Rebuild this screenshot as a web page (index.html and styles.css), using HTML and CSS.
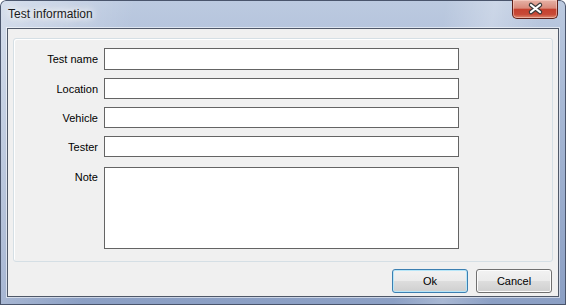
FILE: index.html
```html
<!DOCTYPE html>
<html lang="en">
<head>
    <meta charset="UTF-8">
    <title>Test information</title>
    <link rel="stylesheet" href="styles.css">
</head>
<body>
    <div class="window">
        <div class="titlebar">
            <span class="title">Test information</span>
            <button class="close">
                <svg width="44" height="18" viewBox="0 0 44 18">
                    <path d="M18 5 L27 12 M27 5 L18 12" stroke="#3c3c3c" stroke-width="4.5" stroke-linecap="round"/>
                    <path d="M18 5 L27 12 M27 5 L18 12" stroke="#ffffff" stroke-width="2.2" stroke-linecap="round"/>
                </svg>
            </button>
        </div>

        <div class="client">
            <div class="group">
                <div class="row">
                    <label>Test name</label>
                    <input type="text">
                </div>
                <div class="row">
                    <label>Location</label>
                    <input type="text">
                </div>
                <div class="row">
                    <label>Vehicle</label>
                    <input type="text">
                </div>
                <div class="row">
                    <label>Tester</label>
                    <input type="text">
                </div>
                <div class="row note">
                    <label>Note</label>
                    <textarea></textarea>
                </div>
            </div>

            <div class="buttons">
                <button class="btn default">Ok</button>
                <button class="btn">Cancel</button>
            </div>
        </div>
    </div>
</body>
</html>
```

FILE: styles.css
```css
body {
    margin: 0;
    font-family: "Liberation Sans", Arial, sans-serif;
    font-size: 11px;
    color: #000;
}
.window {
    width: 566px;
    height: 305px;
    box-sizing: border-box;
    display: flex;
    flex-direction: column;
    padding: 0 7px 8px 7px;
    border-radius: 6px 6px 0 0;
    background:
        linear-gradient(100deg, rgba(255, 255, 255, 0.4) 0%, rgba(255, 255, 255, 0) 22%, rgba(255, 255, 255, 0) 72%, rgba(255, 255, 255, 0.25) 80%, rgba(255, 255, 255, 0) 88%),
        linear-gradient(#bccae0, #a9bad6 30%, #8b9fc4 100%);
    box-shadow: inset 0 0 0 1px #4a556c;
}
.titlebar {
    height: 28px;
    display: flex;
    justify-content: space-between;
    align-items: flex-start;
}
.title {
    margin: 7px 0 0 1px;
    font-size: 12px;
    line-height: 14px;
    color: #1a1a1a;
    text-shadow: 0 0 6px #fff, 0 0 10px #fff, 0 0 14px rgba(255, 255, 255, 0.9);
}
.close {
    width: 46px;
    height: 19px;
    margin-right: 1px;
    padding: 0;
    border: 1px solid #5e2019;
    border-top: none;
    border-radius: 0 0 5px 5px;
    background: linear-gradient(#e6b2a6 0%, #d98a7b 45%, #c5412f 52%, #c84a37 80%, #dc8a70 100%);
    box-shadow: inset 0 0 0 1px rgba(255, 220, 210, 0.5);
}
.close svg {
    display: block;
}
.client {
    flex: 1;
    display: flex;
    flex-direction: column;
    padding: 9px 5px 3px 5px;
    background: #f0f0f0;
    border: 1px solid #4f5868;
    box-shadow: 0 0 0 1px rgba(255, 255, 255, 0.55);
}
.group {
    display: flex;
    flex-direction: column;
    padding: 9px 0 12px 0;
    border: 1px solid #d5dfe5;
    border-radius: 3px;
    box-shadow: inset 1px 1px 0 #fff;
}
.row {
    display: flex;
    align-items: center;
    gap: 6px;
}
.row + .row {
    margin-top: 8px;
}
.row.note {
    align-items: flex-start;
    margin-top: 10px;
}
.row label {
    width: 84px;
    text-align: right;
}
.row.note label {
    padding-top: 4px;
}
input, textarea {
    width: 355px;
    height: 21px;
    box-sizing: border-box;
    margin: 0;
    padding: 0 3px;
    border: 1px solid #646464;
    background: #fff;
    font: inherit;
    outline: none;
}
.row:first-child input {
    height: 22px;
}
textarea {
    height: 82px;
    resize: none;
}
.buttons {
    display: flex;
    justify-content: flex-end;
    gap: 8px;
    margin-top: 7px;
    padding-right: 1px;
}
.btn {
    width: 76px;
    height: 24px;
    padding: 0;
    border: 1px solid #707070;
    border-radius: 3px;
    background: linear-gradient(#f2f2f2 0%, #ebebeb 48%, #dddddd 52%, #cfcfcf 100%);
    box-shadow: inset 0 0 0 1px #fcfcfc;
    font: inherit;
    color: #000;
}
.btn.default {
    border-color: #3c7fb1;
    box-shadow: inset 0 0 0 1px #b7e6f8;
}
```
